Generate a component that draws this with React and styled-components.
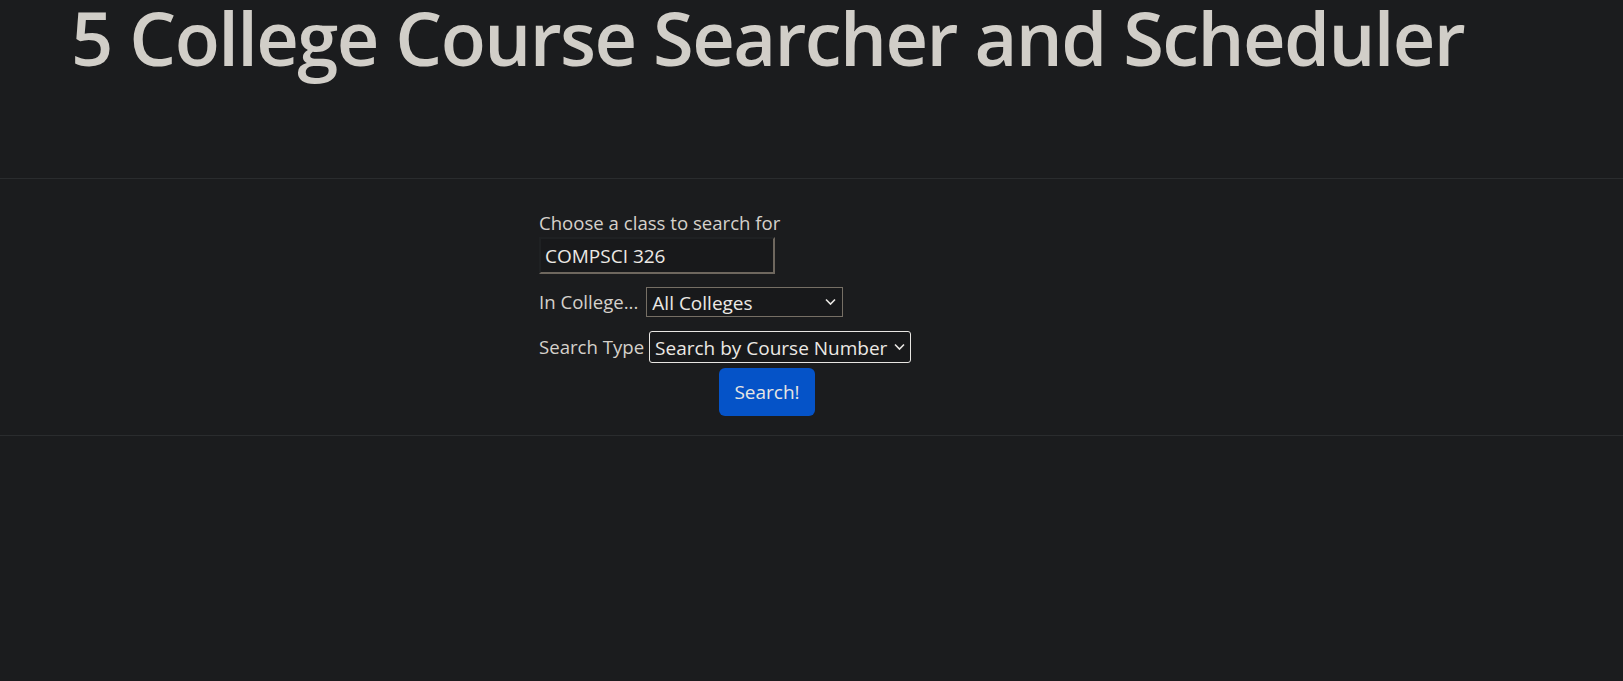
import React from 'react';
import styled, { createGlobalStyle } from 'styled-components';

const GlobalStyle = createGlobalStyle`
    html, body {
        margin: 0;
        padding: 0;
        background: #1b1c1e;
        color: #d5d1cb;
        font-family: "Open Sans", "Noto Sans", "Liberation Sans", sans-serif;
    }
`;

const Page = styled.div`
    min-height: 100vh;
    background: #1b1c1e;
`;

const Header = styled.header`
    height: 179px;
    padding-left: 71px;
    padding-top: 1px;
    border-bottom: 1px solid #2a2c2e;
    box-sizing: border-box;
`;

const Title = styled.h1`
    margin: 0;
    font-size: 74px;
    font-weight: 600;
    line-height: 1;
    color: #d1cec8;
    letter-spacing: -1.6px;
`;

const SearchSection = styled.section`
    padding: 30px 0 19px 539px;
    border-bottom: 1px solid #2a2c2e;
`;

const Form = styled.form`
    width: 456px;
    display: flex;
    flex-direction: column;
`;

const Label = styled.label`
    font-size: 18.6px;
    line-height: 1.5;
    color: #d5d1cb;
`;

const TextInput = styled.input`
    width: 236px;
    height: 37px;
    box-sizing: border-box;
    margin: 0;
    padding: 1px 4px 0;
    font-family: inherit;
    font-size: 19px;
    color: #ece9e5;
    background: #18191b;
    border-style: solid;
    border-width: 2px;
    border-color: #1f2123 #6e675e #6e675e #1f2123;
    outline: none;
`;

const Row = styled.div`
    display: flex;
    align-items: center;
    gap: ${p => p.$gap}px;
    margin-top: ${p => p.$top}px;
`;

const SelectWrap = styled.div`
    position: relative;
    display: inline-flex;
`;

const Select = styled.select`
    appearance: none;
    width: ${p => p.$width}px;
    height: ${p => p.$height}px;
    box-sizing: border-box;
    margin: 0;
    padding: 2px 20px 0 5px;
    font-family: inherit;
    font-size: 19px;
    color: #ece9e5;
    background: #18191b;
    border: 1px solid ${p => (p.$focused ? '#e8e6e3' : '#766f65')};
    border-radius: ${p => (p.$focused ? '3px' : '0')};
    outline: none;
`;

const Chevron = styled.svg`
    position: absolute;
    right: ${p => p.$right}px;
    top: 50%;
    transform: translateY(-50%);
    pointer-events: none;
`;

const ButtonRow = styled.div`
    display: flex;
    justify-content: center;
    margin-top: 5px;
`;

const SearchButton = styled.button`
    width: 96px;
    height: 48px;
    padding: 0;
    font-family: inherit;
    font-size: 19px;
    color: #e8e6e3;
    background: #0553c8;
    border: none;
    border-radius: 6px;
`;

const ChevronIcon = ({ right }) => (
    <Chevron $right={right} width="11" height="7" viewBox="0 0 11 7">
        <path d="M1 1 L5.5 5.5 L10 1" fill="none" stroke="#e8e6e3" strokeWidth="1.6" />
    </Chevron>
);

const App = () => (
    <Page>
        <GlobalStyle />
        <Header>
            <Title>5 College Course Searcher and Scheduler</Title>
        </Header>
        <SearchSection>
            <Form onSubmit={e => e.preventDefault()}>
                <Label htmlFor="course">Choose a class to search for</Label>
                <TextInput id="course" defaultValue="COMPSCI 326" />
                <Row $top={13} $gap={8}>
                    <Label htmlFor="college">In College...</Label>
                    <SelectWrap>
                        <Select id="college" $width={197} $height={30} defaultValue="all">
                            <option value="all">All Colleges</option>
                            <option value="umass">UMass Amherst</option>
                            <option value="amherst">Amherst College</option>
                            <option value="smith">Smith College</option>
                            <option value="mhc">Mount Holyoke College</option>
                            <option value="hampshire">Hampshire College</option>
                        </Select>
                        <ChevronIcon right={7} />
                    </SelectWrap>
                </Row>
                <Row $top={14} $gap={5}>
                    <Label htmlFor="type">Search Type</Label>
                    <SelectWrap>
                        <Select id="type" $width={262} $height={32} $focused defaultValue="number">
                            <option value="number">Search by Course Number</option>
                            <option value="name">Search by Course Name</option>
                        </Select>
                        <ChevronIcon right={6} />
                    </SelectWrap>
                </Row>
                <ButtonRow>
                    <SearchButton type="submit">Search!</SearchButton>
                </ButtonRow>
            </Form>
        </SearchSection>
    </Page>
);

export default App;
